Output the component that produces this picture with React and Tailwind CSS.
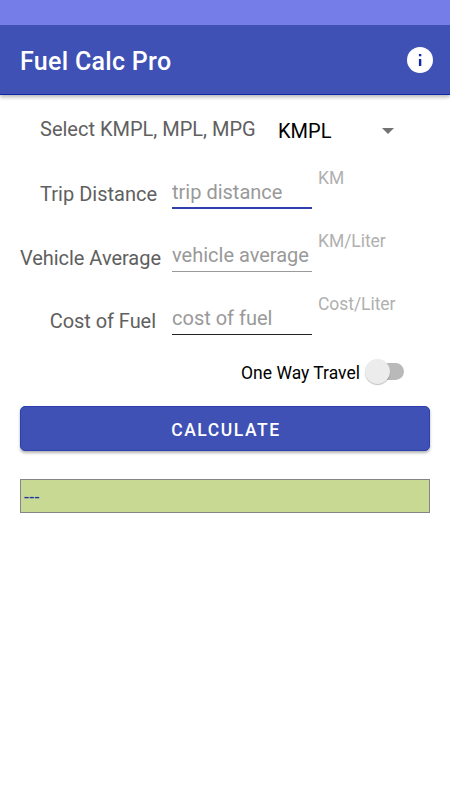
import { useState } from "react";
import clsx from "clsx";

const fields = [
  {
    name: "distance",
    label: "Trip Distance",
    placeholder: "trip distance",
    unit: "KM",
    labelClass: "mt-[14px] pr-[15px]",
    inputClass: "border-b-2 border-[#303fb0]",
  },
  {
    name: "average",
    label: "Vehicle Average",
    placeholder: "vehicle average",
    unit: "KM/Liter",
    labelClass: "mt-[15px] pr-[11px] tracking-[-0.03px]",
    inputClass: "border-b border-[#9a9a9a]",
  },
  {
    name: "cost",
    label: "Cost of Fuel",
    placeholder: "cost of fuel",
    unit: "Cost/Liter",
    labelClass: "mt-[15px] pr-[16px] tracking-[-0.05px]",
    inputClass: "border-b border-[#222222]",
  },
];

function AppBar() {
  return (
    <header className="bg-[#3f51b5] shadow-[0_2px_4px_rgba(0,0,0,0.3)]">
      <div className="h-[25px] bg-[#757de8]" />
      <div className="flex h-[70px] items-center justify-between border-b border-[#1028a8] pl-5 pr-[17px]">
        <h1 className="pt-[5px] text-[25px] font-medium leading-[30px] tracking-[0.3px] text-white">Fuel Calc Pro</h1>
        <button type="button" aria-label="Info">
          <svg viewBox="0 0 26 26" className="block h-[26px] w-[26px]">
            <circle cx="13" cy="13" r="13" fill="#fff" />
            <path d="M11.9 7h2.4v2.2h-2.4zM11.9 12h2.4v7h-2.4z" fill="#1028a8" />
          </svg>
        </button>
      </div>
    </header>
  );
}

function Field({ field, value, onChange }) {
  return (
    <div className="flex h-[63px] items-start">
      <label
        htmlFor={field.name}
        className={clsx("w-[172px] whitespace-nowrap text-right text-[20px] leading-6 text-[#606060]", field.labelClass)}
      >
        {field.label}
      </label>
      <input
        id={field.name}
        name={field.name}
        value={value}
        onChange={onChange}
        placeholder={field.placeholder}
        className={clsx("h-[41px] w-[140px] pb-0 pt-2 text-[20px] outline-none placeholder:text-[#999999]", field.inputClass)}
      />
      <span className="ml-[6px] text-[17.5px] leading-5 tracking-[-0.05px] text-[#b0b0b0]">{field.unit}</span>
    </div>
  );
}

export default function App() {
  const [form, setForm] = useState({ distance: "", average: "", cost: "" });
  const [oneWay, setOneWay] = useState(false);
  const [result, setResult] = useState("---");

  const handleChange = (e) => {
    setForm({ ...form, [e.target.name]: e.target.value });
  };

  const calculate = () => {
    const distance = Number(form.distance) * (oneWay ? 1 : 2);
    const total = (distance / Number(form.average)) * Number(form.cost);
    setResult(Number.isFinite(total) ? total.toFixed(2) : "---");
  };

  return (
    <div className="min-h-screen bg-white font-['Roboto',sans-serif]">
      <AppBar />
      <main>
        <div className="flex h-[73px] items-start pl-10 pt-[22px]">
          <span className="w-[238px] whitespace-nowrap text-[20px] leading-6 text-[#606060]">
            Select KMPL, MPL, MPG
          </span>
          <button type="button" className="mt-[2px] flex w-[116px] items-center justify-between text-[20px] leading-6 text-black">
            KMPL
            <svg viewBox="0 0 12 6" className="h-[6px] w-3">
              <path d="M0 0h12L6 6z" fill="#737373" />
            </svg>
          </button>
        </div>

        {fields.map((field) => (
          <Field key={field.name} field={field} value={form[field.name]} onChange={handleChange} />
        ))}

        <div className="flex h-[49px] items-start justify-end pr-[46px] pt-px">
          <span className="mt-[5px] whitespace-nowrap text-[17.5px] leading-5 text-black">One Way Travel</span>
          <button
            type="button"
            role="switch"
            aria-checked={oneWay}
            aria-label="One Way Travel"
            onClick={() => setOneWay(!oneWay)}
            className="ml-[5px] flex h-[26px] w-[39px] items-center"
          >
            <span className="ml-[5px] flex h-[17px] w-[34px] items-center rounded-full bg-[#b9b9b9]">
              <span
                className={clsx(
                  "h-[25px] w-[25px] shrink-0 rounded-full bg-[#ececec] shadow-[0_1px_1px_rgba(0,0,0,0.25)]",
                  oneWay ? "ml-[9px]" : "-ml-[5px]"
                )}
              />
            </span>
          </button>
        </div>

        <div className="px-5">
          <button
            type="button"
            onClick={calculate}
            className="block h-[45px] w-full rounded-[5px] border border-[#2c3fac] bg-[#3f51b5] pl-[2px] pt-[3px] text-[17.5px] font-medium tracking-[1.56px] text-white shadow-[0_2px_3px_rgba(0,0,0,0.3)]"
          >
            CALCULATE
          </button>
          <div className="mt-[28px] flex h-[34px] items-center border border-[#858585] bg-[#c8d993] pl-[3px] pt-[2px] text-[17.5px] tracking-[0.4px] text-[#1a34a8]">
            {result}
          </div>
        </div>
      </main>
    </div>
  );
}
